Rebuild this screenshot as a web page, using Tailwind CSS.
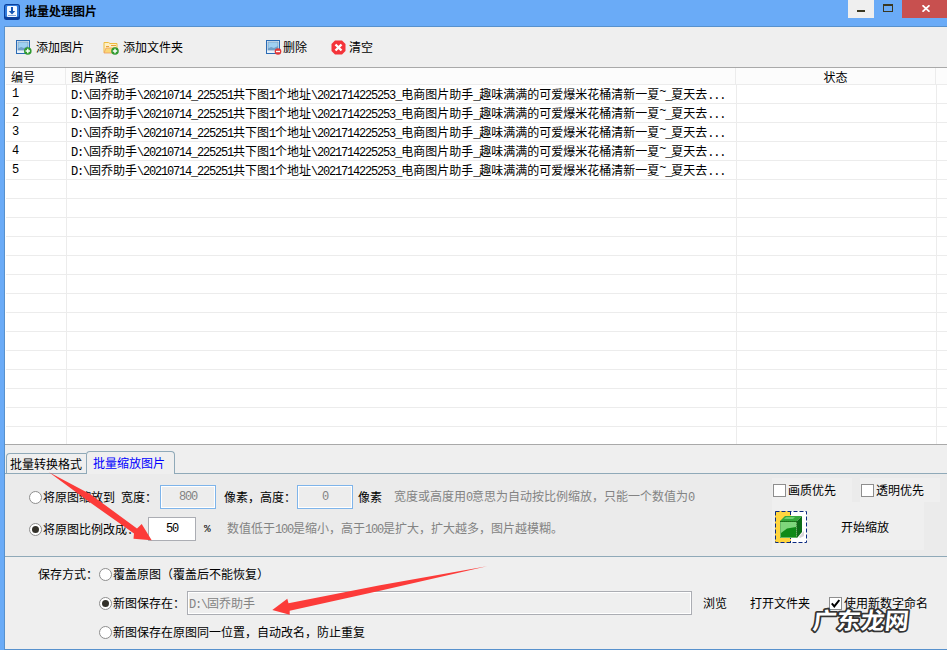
<!DOCTYPE html>
<html lang="zh-CN">

<head>
  <meta charset="UTF-8" />
  <meta name="viewport" content="width=device-width, initial-scale=1.0" />
  <title>批量处理图片</title>
  <script src="https://cdn.jsdelivr.net/npm/@tailwindcss/browser@4"></script>
</head>

<body class="w-[947px] h-[650px] overflow-hidden bg-[#6aabf7] font-['Noto_Sans_CJK_SC',sans-serif] text-[12px] leading-[14px] text-black whitespace-nowrap">
  <div class="relative w-[947px] h-[650px] flex flex-col">

    <!-- Title bar -->
    <header class="h-[26px] shrink-0 flex items-start">
      <svg class="ml-1 mt-1 size-4" viewBox="0 0 16 16">
        <rect width="16" height="16" rx="2.5" fill="#0b3f9b" />
        <rect x="1" y="1" width="14" height="12" rx="1.5" fill="#2f7bdc" />
        <rect x="3" y="2" width="10" height="11" rx="1" fill="#f4f8ff" />
        <path d="M7 3h2v4h2.200L8 10.500 4.800 7H7z" fill="#1656b4" />
        <path d="M4 11.500h8" stroke="#7fa6dc" />
      </svg>
      <h1 class="ml-[5px] mt-[4px] font-bold">批量处理图片</h1>
      <div class="ml-auto flex h-[18px]">
        <button class="w-[26px] bg-[#efefef] flex justify-center pt-[10px]"><span class="w-2 h-[2px] bg-[#3a3822]"></span></button>
        <button class="w-[28px] flex justify-center pt-1"><span class="w-[10px] h-2 border border-t-2 border-[#3a3822]"></span></button>
        <button class="w-[45px] bg-[#c8504f] flex justify-center pt-[5px] pl-[3px]">
          <svg class="w-2 h-[7px]" viewBox="0 0 8 7" stroke="#fff" stroke-width="1.800"><path d="M.5.3l7 6.400M7.500.3l-7 6.400" /></svg>
        </button>
      </div>
    </header>

    <main class="ml-[4px] h-[624px] border-t border-l border-b border-[#5791cd] bg-[#efefef] flex flex-col">

      <!-- Toolbar -->
      <nav class="h-10 shrink-0 flex items-center pl-[11px]">
        <button class="w-[87px] flex items-center gap-[4px]">
          <svg class="w-4 h-[15px]" viewBox="0 0 16 15">
            <rect x=".5" y=".5" width="13" height="13" fill="#e8f2fb" stroke="#2a6bb5" />
            <rect x="2" y="2" width="10" height="8" fill="#9fd0f2" stroke="#7d9fbe" stroke-width=".8" />
            <path d="M2 8.500l3-1.500 3 1 4-2v4H2z" fill="#6f9fc8" />
            <circle cx="11.800" cy="11" r="3.800" fill="#2f9a2f" />
            <path d="M11.800 8.800v4.400M9.600 11h4.400" stroke="#fff" stroke-width="1.400" />
          </svg>
          <span>添加图片</span>
        </button>
        <button class="w-[163px] flex items-center gap-[4px]">
          <svg class="w-4 h-[15px]" viewBox="0 0 16 15">
            <path d="M1 12.500v-10h4.500l1.500 1h7v9z" fill="#fdf0c4" stroke="#eebc3e" />
            <path d="M8 5.500h5M3 6.500h3" stroke="#e9a13a" />
            <path d="M1 13l2-5h10l-1 5z" fill="#fbd775" stroke="#ee9d60" stroke-width=".8" />
            <circle cx="12" cy="11" r="3.800" fill="#2f9a2f" />
            <path d="M12 8.800v4.400M9.800 11h4.400" stroke="#fff" stroke-width="1.400" />
          </svg>
          <span>添加文件夹</span>
        </button>
        <button class="w-[65px] flex items-center gap-[1px]">
          <svg class="w-4 h-[15px]" viewBox="0 0 16 15">
            <rect x=".5" y=".5" width="13" height="13" fill="#e8f2fb" stroke="#2a6bb5" />
            <rect x="2" y="2" width="10" height="8" fill="#9fd0f2" stroke="#7d9fbe" stroke-width=".8" />
            <path d="M2 8.500l3-1.500 3 1 4-2v4H2z" fill="#6f9fc8" />
            <circle cx="12" cy="11.500" r="3.300" fill="#df3838" />
            <path d="M10 11.500h4" stroke="#fff" stroke-width="1.400" />
          </svg>
          <span>删除</span>
        </button>
        <button class="flex items-center gap-[3px]">
          <svg class="size-[15px]" viewBox="0 0 15 15">
            <path d="M4 .5h7L14.500 4v7L11 14.500H4L.5 11V4z" fill="#f4343a" />
            <path d="M4.500 4.500l6 6M10.500 4.500l-6 6" stroke="#fff" stroke-width="2.400" />
          </svg>
          <span>清空</span>
        </button>
      </nav>

      <!-- File list -->
      <section class="h-[378px] shrink-0 border-y border-[#a9a9a9] bg-white pl-px overflow-hidden">
        <div class="h-[17px] flex bg-[#fcfcfc] border-b border-[#ececec] leading-[18px]">
          <div class="w-[60px] pl-[5px] border-r border-[#ececec]">编号</div>
          <div class="w-[670px] pl-[5px] border-r border-[#ececec]">图片路径</div>
          <div class="w-[200px] text-center border-r border-[#ececec]">状态</div>
        </div>
        <div id="rows"></div>
      </section>

      <!-- Tabs -->
      <div class="h-[29px] shrink-0 flex items-end pl-px relative border-b border-[#8fa9b8]">
        <div class="w-[80px] h-5 border-t border-l border-[#8fa9b8] rounded-tl-sm pl-[3px] pt-[3px]">批量转换格式</div>
        <div class="w-[89px] h-[23px] -mb-px border-t border-x border-[#8fa9b8] rounded-t-sm bg-[#efefef] pl-[6px] pt-[4px] text-[#0000ff]">批量缩放图片</div>
      </div>

      <!-- Scale settings -->
      <section class="h-[83px] shrink-0 flex justify-between bg-[#ebebeb] border-b border-[#8fa9b8]">
        <div class="pt-[11px] pl-6">
          <div class="flex items-center h-6">
            <span class="size-[13px] rounded-full border border-[#8e8e8e] bg-white"></span>
            <span class="ml-[1px] w-[78px]">将原图缩放到</span>
            <span class="w-[39px]">宽度：</span>
            <div class="w-14 h-6 border border-[#7eb4ea] bg-[#ededed] shadow-[inset_0_0_0_1px_#fff] text-center leading-[22px] text-[#838383] font-['Liberation_Mono',monospace] text-[12px] tracking-[-1.2px]">800</div>
            <span class="ml-2 w-[73px]">像素，高度：</span>
            <div class="w-14 h-6 border border-[#7eb4ea] bg-[#ededed] shadow-[inset_0_0_0_1px_#fff] text-center leading-[22px] text-[#838383] font-['Liberation_Mono',monospace] text-[12px] tracking-[-1.2px]">0</div>
            <span class="ml-[5px] w-9">像素</span>
            <span class="text-[#838383]">宽度或高度用<span class="font-['Liberation_Mono',monospace] tracking-[-1.2px]">0</span>意思为自动按比例缩放，只能一个数值为<span class="font-['Liberation_Mono',monospace] tracking-[-1.2px]">0</span></span>
          </div>
          <div class="flex items-center h-6 mt-2">
            <span class="size-[13px] rounded-full border border-[#8e8e8e] bg-white flex items-center justify-center"><span class="size-[7px] rounded-full bg-[#33312a]"></span></span>
            <span class="ml-[1px] w-[105px]">将原图比例改成：</span>
            <div class="w-12 h-6 border border-[#abadb3] bg-white text-center leading-[22px] font-['Liberation_Mono',monospace] text-[12px] tracking-[-1.2px]">50</div>
            <span class="ml-2 w-[23px] font-['Liberation_Mono',monospace] text-[11px]">%</span>
            <span class="text-[#838383]">数值低于<span class="font-['Liberation_Mono',monospace] tracking-[-1.2px]">100</span>是缩小，高于<span class="font-['Liberation_Mono',monospace] tracking-[-1.2px]">100</span>是扩大，扩大越多，图片越模糊。</span>
          </div>
        </div>
        <div class="w-[175px] pt-[4px]">
          <div class="flex h-6 gap-2">
            <label class="w-20 flex items-center gap-[2px] bg-[#efefef] pl-px"><span class="size-[13px] border border-[#8e8e8e] bg-white"></span>画质优先</label>
            <label class="w-20 flex items-center gap-[2px] bg-[#efefef] pl-px"><span class="size-[13px] border border-[#8e8e8e] bg-white"></span>透明优先</label>
          </div>
          <button class="w-[152px] h-12 bg-[#efefef] flex items-center pl-[3px] pt-px">
            <svg class="size-8" viewBox="0 0 32 32">
              <rect width="16" height="32" fill="#ffd53f" />
              <rect x="16" width="16" height="32" fill="#fff" />
              <rect x=".5" y=".5" width="31" height="31" fill="none" stroke="#0b2a80" stroke-dasharray="4 2" />
              <path d="M15.500 0v32" stroke="#0b2a80" stroke-dasharray="4 2" />
              <path d="M24 26l5-6v5l-4 2z" fill="#d8d4d8" />
              <path d="M5 10l5-5h17l-5 5z" fill="#35a83c" />
              <path d="M9 8l2-2h9l-2 2z" fill="#6fd070" />
              <path d="M22 10l5-5v16l-5 6z" fill="#0b6d17" />
              <path d="M5 10h17v17H5z" fill="#0f8a18" />
              <path d="M6 11h15v5l-9 1.500-6 4.500z" fill="#7ed67c" />
              <path d="M5.500 11v15.500h16V11" fill="none" stroke="#7cc47c" stroke-width=".8" />
              <path d="M5 10.500h17M22 11v15.500" fill="none" stroke="#285f20" stroke-dasharray="1 1" />
            </svg>
            <span class="ml-[34px]">开始缩放</span>
          </button>
        </div>
      </section>

      <!-- Save options -->
      <section class="pt-[5px] pl-[33px]">
        <div class="flex items-center h-6">
          <span class="w-[61px]">保存方式：</span>
          <span class="size-[13px] rounded-full border border-[#8e8e8e] bg-white"></span>
          <span class="ml-[1px]">覆盖原图（覆盖后不能恢复）</span>
        </div>
        <div class="flex items-center h-6 mt-[5px] pl-[61px]">
          <span class="size-[13px] rounded-full border border-[#8e8e8e] bg-white flex items-center justify-center"><span class="size-[7px] rounded-full bg-[#33312a]"></span></span>
          <span class="ml-[1px] w-[74px]">新图保存在：</span>
          <div class="w-[505px] h-6 border border-[#abadb3] shadow-[inset_0_0_0_1px_#fff] pl-px leading-[22px] text-[#838383]"><span class="font-['Liberation_Mono',monospace] tracking-[-1.2px]">D:\</span>固乔助手</div>
          <span class="ml-[11px] w-[47px]">浏览</span>
          <span class="w-[79px]">打开文件夹</span>
          <span class="size-[13px] border border-[#8e8e8e] bg-white flex items-center justify-center">
            <svg class="size-[9px]" viewBox="0 0 9 9"><path d="M.8 4.300l2.500 3L8.300 1" fill="none" stroke="#000" stroke-width="2" /></svg>
          </span>
          <span class="ml-[2px]">使用新数字命名</span>
        </div>
        <div class="flex items-center h-6 mt-[5px] pl-[61px]">
          <span class="size-[13px] rounded-full border border-[#8e8e8e] bg-white"></span>
          <span class="ml-[1px]">新图保存在原图同一位置，自动改名，防止重复</span>
        </div>
      </section>
    </main>

    <!-- Arrows and watermark over the window -->
    <svg class="absolute inset-0 w-[947px] h-[650px] pointer-events-none" viewBox="0 0 947 650">
      <g fill="#fc3b39">
        <path d="M49 472.300L90 494L137 528.500L141.700 524L151.700 540.300L133.500 538.700L134 533.500L88 501z" />
        <path d="M487 566.300L380 585.300L288.500 603.300L287.300 598.700L272.300 610L289.700 614.700L289.700 610.700L380 590.700z" />
      </g>
      <text x="812" y="629" transform="translate(812 629) skewX(-6) translate(-812 -629)" textLength="96" lengthAdjust="spacingAndGlyphs" class="font-bold" font-size="23" fill="#fff" stroke="#333" stroke-width="3.500" stroke-linejoin="round" paint-order="stroke">广东龙网</text>
    </svg>
  </div>

  <template id="row-template">
    <div class="h-[19px] flex border-b border-[#ececec] leading-[18px]">
      <div class="w-[61px] pl-[6px] border-r border-[#ececec] font-['Liberation_Mono',monospace]" data-no></div>
      <div class="w-[670px] pl-[4px] border-r border-[#ececec]" data-path></div>
      <div class="w-[200px] border-r border-[#ececec]"></div>
    </div>
  </template>

  <script>
    const path = 'D:\\固乔助手\\20210714_225251共下图1个地址\\2021714225253_电商图片助手_趣味满满的可爱爆米花桶清新一夏~_夏天去...';
    // half-width characters take half the width of a Chinese one
    const html = path
      .replace(/[\x20-\x7e]+/g, (s) => `<span class="font-['Liberation_Mono',monospace] tracking-[-1.2px]">${s}</span>`)
      .replace('~', '<span class="relative -top-1">~</span>');
    const rows = document.getElementById('rows');
    const template = document.getElementById('row-template');

    for (let i = 1; i <= 19; i++) {
      const row = template.content.cloneNode(true);
      if (i <= 5) {
        row.querySelector('[data-no]').textContent = i;
        row.querySelector('[data-path]').innerHTML = html;
      }
      rows.appendChild(row);
    }
  </script>
</body>

</html>
